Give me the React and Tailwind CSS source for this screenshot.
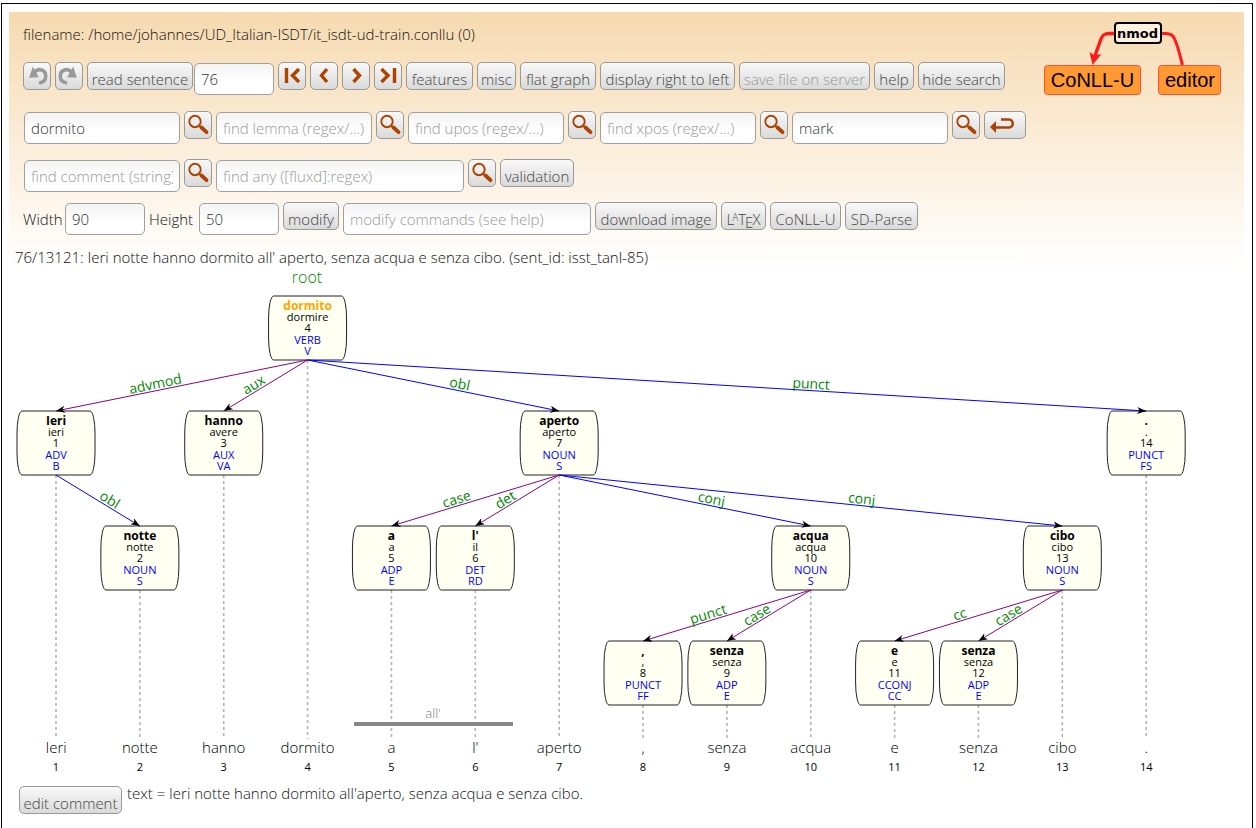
import React from "react";

const COLUMN = 83.86;
const colX = (id) => 56 + (id - 1) * COLUMN;
const levelY = (level) => 296 + level * 115;
const BOX_W = 78;
const BOX_H = 64;

const tokens = [
  { id: 1, form: "Ieri", lemma: "ieri", upos: "ADV", xpos: "B", head: 4, rel: "advmod", level: 1 },
  { id: 2, form: "notte", lemma: "notte", upos: "NOUN", xpos: "S", head: 1, rel: "obl", level: 2 },
  { id: 3, form: "hanno", lemma: "avere", upos: "AUX", xpos: "VA", head: 4, rel: "aux", level: 1 },
  { id: 4, form: "dormito", lemma: "dormire", upos: "VERB", xpos: "V", head: 0, rel: "root", level: 0, found: true },
  { id: 5, form: "a", lemma: "a", upos: "ADP", xpos: "E", head: 7, rel: "case", level: 2 },
  { id: 6, form: "l'", lemma: "il", upos: "DET", xpos: "RD", head: 7, rel: "det", level: 2 },
  { id: 7, form: "aperto", lemma: "aperto", upos: "NOUN", xpos: "S", head: 4, rel: "obl", level: 1 },
  { id: 8, form: ",", lemma: ",", upos: "PUNCT", xpos: "FF", head: 10, rel: "punct", level: 3 },
  { id: 9, form: "senza", lemma: "senza", upos: "ADP", xpos: "E", head: 10, rel: "case", level: 3 },
  { id: 10, form: "acqua", lemma: "acqua", upos: "NOUN", xpos: "S", head: 7, rel: "conj", level: 2 },
  { id: 11, form: "e", lemma: "e", upos: "CCONJ", xpos: "CC", head: 13, rel: "cc", level: 3 },
  { id: 12, form: "senza", lemma: "senza", upos: "ADP", xpos: "E", head: 13, rel: "case", level: 3 },
  { id: 13, form: "cibo", lemma: "cibo", upos: "NOUN", xpos: "S", head: 7, rel: "conj", level: 2 },
  { id: 14, form: ".", lemma: ".", upos: "PUNCT", xpos: "FS", head: 4, rel: "punct", level: 1 },
];

function Button({ className = "", children, ...rest }) {
  return (
    <button
      type="button"
      className={`flex h-7 shrink-0 items-center justify-center whitespace-nowrap rounded-[5px] border border-[#999] bg-linear-to-b from-[#f9f9f9] to-[#dadada] text-[#444] disabled:text-[#999] ${className}`}
      {...rest}
    >
      {children}
    </button>
  );
}

function TextButton({ className, children, ...rest }) {
  return (
    <Button className={`pt-1.5 ${className}`} {...rest}>
      {children}
    </Button>
  );
}

function Field({ className = "w-[156px]", ...rest }) {
  return (
    <input
      type="text"
      className={`mt-px h-8 min-w-0 rounded-[5px] border border-[#a0a0a0] bg-linear-to-b from-[#f3f3f3] to-white to-60% px-1.5 text-[#333] placeholder:text-[#999] ${className}`}
      {...rest}
    />
  );
}

function SearchButton({ label }) {
  return (
    <Button className="w-7" aria-label={label}>
      <svg viewBox="0 0 28 28" className="size-7 shrink-0" fill="none" stroke="#ad4300">
        <circle cx="11" cy="10.500" r="5.700" strokeWidth="1.900" />
        <path d="M15 14.500l2 2" strokeWidth="2" />
        <path d="M17.500 16.500l5 4.700" strokeWidth="3.800" strokeLinecap="round" />
      </svg>
    </Button>
  );
}

function NavButton({ label, d }) {
  return (
    <Button className="w-7" aria-label={label}>
      <svg viewBox="0 0 28 28" className="size-7 shrink-0" fill="none" stroke="#ad4300" strokeWidth="3.400">
        <path d={d} />
      </svg>
    </Button>
  );
}

function TurnIcon({ flipped }) {
  return (
    <svg viewBox="0 0 28 28" className={`size-7 shrink-0 ${flipped ? "-scale-x-100" : ""}`}>
      <path d="M9.800 4.500L6.200 15.800l9.600-.6z" fill="#999" />
      <path d="M11.500 10C15.500 5.800 22.700 7.600 22.700 14.200c0 4-2.700 6.200-6.700 6.800" fill="none" stroke="#999" strokeWidth="3.600" />
    </svg>
  );
}

function Logo() {
  return (
    <svg viewBox="1043 22 180 76" width="180" height="76" className="mt-2.5 shrink-0" role="img" aria-label="CoNLL-U editor">
      <path d="M1114 33.500h-5c-4.500 0-6.500 1.200-8 5.500l-6.500 18" fill="none" stroke="#ff1a1a" strokeWidth="3.400" />
      <path d="M1092.500 65l-3-13 5 3.600 7-1.600z" fill="#ff1a1a" />
      <path d="M1161 33.500h5c4.500 0 7 1.400 8.600 5.500 4 9 5.400 17 7.900 26" fill="none" stroke="#ff1a1a" strokeWidth="3" />
      <rect x="1115" y="23" width="46" height="20" rx="3" fill="#fff0e0" stroke="#000" strokeWidth="2" />
      <text x="1137.500" y="38" textAnchor="middle" className="font-['DejaVu_Sans'] text-[13px] font-bold">nmod</text>
      <rect x="1044.500" y="65.500" width="96" height="29" rx="3" fill="#ff9933" stroke="#ff4d33" />
      <text x="1092.500" y="87" textAnchor="middle" className="font-['Liberation_Sans'] text-[20px] font-normal">CoNLL-U</text>
      <rect x="1158.500" y="65.500" width="62" height="29" rx="3" fill="#ff9933" stroke="#ff4d33" />
      <text x="1190" y="87" textAnchor="middle" className="font-['Liberation_Sans'] text-[20px] font-normal">editor</text>
    </svg>
  );
}

function Edge({ token }) {
  const head = tokens.find((t) => t.id === token.head);
  const x1 = colX(head.id);
  const y1 = levelY(head.level) + BOX_H;
  const x2 = colX(token.id);
  const y2 = levelY(token.level);
  const dx = x2 - x1;
  const dy = y2 - y1;
  const slope = (Math.atan(dy / dx) * 180) / Math.PI;
  const heading = (Math.atan2(dy, dx) * 180) / Math.PI;
  return (
    <g>
      <line x1={x1} y1={y1} x2={x2} y2={y2} stroke={dx < 0 ? "#8b008b" : "#0000ff"} />
      <path d="M0 0L-9-3.500-6.500 0-9 3.500z" transform={`translate(${x2} ${y2}) rotate(${heading})`} />
      <text
        y="-2"
        textAnchor="middle"
        fill="#008800"
        className="text-[14px] font-medium"
        transform={`translate(${x1 + dx * 0.6} ${y1 + dy * 0.6}) rotate(${slope})`}
      >
        {token.rel}
      </text>
    </g>
  );
}

function Node({ token }) {
  const x = colX(token.id);
  const y = levelY(token.level);
  return (
    <g textAnchor="middle">
      <rect x={x - BOX_W / 2} y={y} width={BOX_W} height={BOX_H} rx="5" ry="22" fill="#fffff2" stroke="#222" />
      <text x={x} y={y + 14} fill={token.found ? "#ffa500" : "#000"} className="text-[12px] font-bold">{token.form}</text>
      <g className="text-[11px] font-normal">
        <text x={x} y={y + 25}>{token.lemma}</text>
        <text x={x} y={y + 36}>{token.id}</text>
        <text x={x} y={y + 48} fill="#0000ff">{token.upos}</text>
        <text x={x} y={y + 59} fill="#0000ff">{token.xpos}</text>
      </g>
    </g>
  );
}

function Tree() {
  return (
    <svg viewBox="9 267 1235 512" className="block h-auto w-full" role="img" aria-label="Dependency tree">
      {tokens.map((t) => (
        <line key={t.id} x1={colX(t.id)} x2={colX(t.id)} y1={levelY(t.level) + BOX_H} y2="739" stroke="#b4b4b4" strokeWidth="1.600" strokeDasharray="3 3" />
      ))}
      <text x="307" y="283" textAnchor="middle" fill="#008800" className="text-[16px]">root</text>
      {tokens.map((t) => <Node key={t.id} token={t} />)}
      {tokens.filter((t) => t.head > 0).map((t) => <Edge key={t.id} token={t} />)}
      <text x="433" y="718" textAnchor="middle" fill="#777" className="text-[13px]">all'</text>
      <rect x="354" y="722" width="159" height="4" fill="#888" />
      {tokens.map((t) => (
        <g key={t.id} textAnchor="middle">
          <text x={colX(t.id)} y="753" className="text-[15px]">{t.form}</text>
          <text x={colX(t.id)} y="771" className="text-[11px] font-normal">{t.id}</text>
        </g>
      ))}
    </svg>
  );
}

export default function App() {
  return (
    <div className="flex min-h-screen flex-col bg-white pl-px pr-[3px] pt-[3px] font-['Open_Sans',sans-serif] text-[15px] leading-5 font-light text-[#111]">
      <main className="flex-1 border-x border-t border-black pl-[7px] pr-2 pt-2">
        <header className="bg-linear-to-b from-[#f6dab0] to-white">
          <div className="flex justify-between pr-[21px] pl-3.5">
            <div className="min-w-0 pt-3">
              <p>filename: /home/johannes/UD_Italian-ISDT/it_isdt-ud-train.conllu (0)</p>
              <div className="mt-[18px] flex items-start gap-1">
                <Button className="w-7" disabled aria-label="undo"><TurnIcon /></Button>
                <Button className="w-7" disabled aria-label="redo"><TurnIcon flipped /></Button>
                <div className="flex gap-px">
                  <TextButton className="w-[106px]">read sentence</TextButton>
                  <Field className="w-20" aria-label="sentence number" defaultValue="76" />
                </div>
                <NavButton label="first" d="M8.500 6v15M21 7l-6.500 6.500L21 20" />
                <NavButton label="previous" d="M17 7l-5.500 6.500L17 20" />
                <NavButton label="next" d="M11.500 7l6 6.500-6 6.500" />
                <NavButton label="last" d="M7.500 7l6.500 6.500L7.500 20M20.500 6v15" />
                <TextButton className="w-[67px]">features</TextButton>
                <TextButton className="w-[39px]">misc</TextButton>
                <TextButton className="w-[76px]">flat graph</TextButton>
                <TextButton className="w-[135px]">display right to left</TextButton>
                <TextButton className="w-[131px]" disabled>save file on server</TextButton>
                <TextButton className="w-10">help</TextButton>
                <TextButton className="w-[87px]">hide search</TextButton>
              </div>
              <div className="mt-4 flex items-start gap-1 pl-px">
                <Field aria-label="find form" defaultValue="dormito" />
                <SearchButton label="search form" />
                <Field aria-label="find lemma" placeholder="find lemma (regex/...)" />
                <SearchButton label="search lemma" />
                <Field aria-label="find upos" placeholder="find upos (regex/...)" />
                <SearchButton label="search upos" />
                <Field aria-label="find xpos" placeholder="find xpos (regex/...)" />
                <SearchButton label="search xpos" />
                <Field aria-label="find relation" defaultValue="mark" />
                <SearchButton label="search relation" />
                <Button className="w-[42px]" aria-label="backwards">
                  <svg viewBox="0 0 42 28" className="h-7 w-[42px] shrink-0" fill="none" stroke="#ad4300" strokeWidth="2.600">
                    <path d="M17 8.500h8c5 0 5 8 0 8H9" />
                    <path d="M12 10v12L6 16z" fill="#ad4300" stroke="none" />
                  </svg>
                </Button>
              </div>
              <div className="mt-[15px] flex items-start gap-1 pl-px">
                <Field aria-label="find comment" placeholder="find comment (string)" />
                <SearchButton label="search comment" />
                <Field className="w-[248px]" aria-label="find any" placeholder="find any ([fluxd]:regex)" />
                <SearchButton label="search any" />
                <TextButton className="w-[74px]">validation</TextButton>
              </div>
              <div className="mt-2.5 flex items-start gap-1">
                <label htmlFor="width" className="w-[38px] pt-[7px]">Width</label>
                <Field id="width" className="w-20" defaultValue="90" />
                <label htmlFor="height" className="w-[46px] pt-[7px]">Height</label>
                <Field id="height" className="w-20" defaultValue="50" />
                <TextButton className="w-14">modify</TextButton>
                <Field className="w-[248px]" aria-label="modify commands" placeholder="modify commands (see help)" />
                <TextButton className="w-[122px]">download image</TextButton>
                <TextButton className="w-[45px]" aria-label="LaTeX">
                  <span>
                    L<span className="-ml-0.5 align-[4px] text-[10px]">A</span>T<span className="-mx-px align-[-3px]">E</span>X
                  </span>
                </TextButton>
                <TextButton className="w-[71px]">CoNLL-U</TextButton>
                <TextButton className="w-[73px]">SD-Parse</TextButton>
              </div>
            </div>
            <Logo />
          </div>
          <p className="mt-3 pl-1.5">
            76/13121: Ieri notte hanno dormito all' aperto, senza acqua e senza cibo. (sent_id: isst_tanl-85)
          </p>
        </header>
        <Tree />
        <footer className="mt-[7px] flex items-start gap-[5px] pl-2.5">
          <TextButton className="w-[103px]">edit comment</TextButton>
          <p className="-mt-[3px]">text = Ieri notte hanno dormito all'aperto, senza acqua e senza cibo.</p>
        </footer>
      </main>
    </div>
  );
}
